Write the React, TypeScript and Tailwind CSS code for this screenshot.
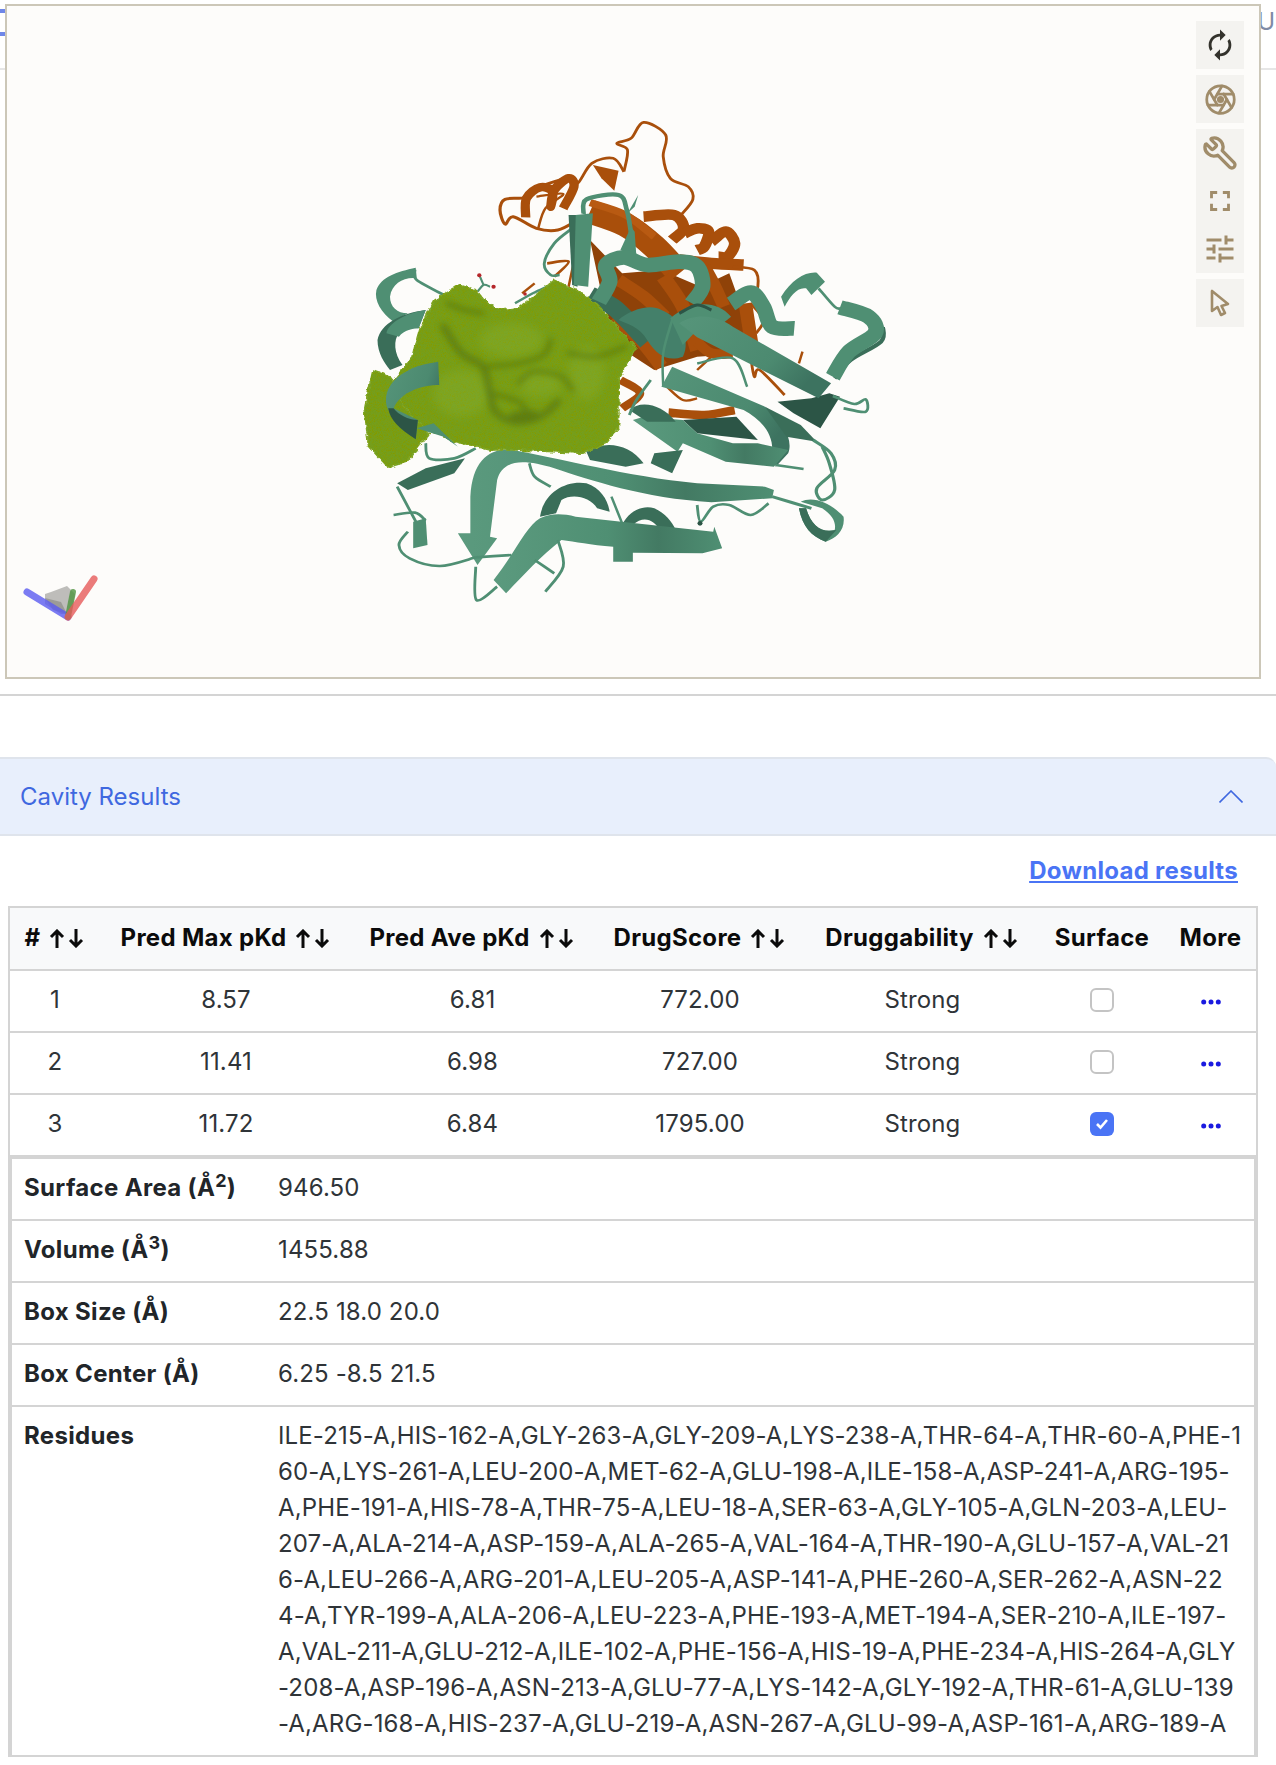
import { Aperture, Wrench } from "lucide-react";

const tan = "#a08c6a";

function ToolBtn({ children }: { children: React.ReactNode }) {
  return <div className="w-12 h-12 flex items-center justify-center">{children}</div>;
}

// Catmull-Rom curve through a list of points, for the protein's backbone drawing.
function sm(pts: number[][]) {
  let d = `M${pts[0][0]} ${pts[0][1]}`;
  for (let i = 0; i < pts.length - 1; i++) {
    const p0 = pts[i - 1] || pts[i];
    const p1 = pts[i];
    const p2 = pts[i + 1];
    const p3 = pts[i + 2] || p2;
    const c1x = p1[0] + (p2[0] - p0[0]) / 6;
    const c1y = p1[1] + (p2[1] - p0[1]) / 6;
    const c2x = p2[0] - (p3[0] - p1[0]) / 6;
    const c2y = p2[1] - (p3[1] - p1[1]) / 6;
    d += ` C${c1x} ${c1y} ${c2x} ${c2y} ${p2[0]} ${p2[1]}`;
  }
  return d;
}

function R({ p, w, c, cap = "butt" }: { p: number[][]; w: number; c: string; cap?: "butt" | "round" }) {
  return <path d={sm(p)} fill="none" stroke={c} strokeWidth={w} strokeLinecap={cap} strokeLinejoin="round" />;
}

function Protein() {
  const T = "#4f8f73";
  const M = "#44806a";
  const S = "#3a6e59";
  const D = "#2c5546";
  const O = "#a94f0b";
  const OD = "#8f4208";
  const OL = "#b85a12";
  return (
    <svg viewBox="0 0 1568 1560" preserveAspectRatio="none" className="absolute left-[333px] top-[94px] w-[560px] h-[520px]">
      <defs>
        <linearGradient id="s1" x1="0" x2="1" y1="0" y2="0">
          <stop offset="0" stopColor="#5b9a7e" />
          <stop offset="0.5" stopColor="#4f8f73" />
          <stop offset="0.72" stopColor="#437a63" />
          <stop offset="1" stopColor="#4f8f73" />
        </linearGradient>
        <linearGradient id="s2" x1="0" x2="1" y1="0" y2="0.5">
          <stop offset="0" stopColor="#56957a" />
          <stop offset="0.7" stopColor="#4c8a70" />
          <stop offset="1" stopColor="#3d7360" />
        </linearGradient>
        <filter id="tex" x="-5%" y="-5%" width="110%" height="110%">
          <feTurbulence type="fractalNoise" baseFrequency="0.06" numOctaves="2" seed="7" result="e" />
          <feDisplacementMap in="SourceGraphic" in2="e" scale="16" xChannelSelector="R" yChannelSelector="G" result="g" />
          <feTurbulence type="fractalNoise" baseFrequency="0.55" numOctaves="2" seed="4" result="n" />
          <feColorMatrix in="n" type="matrix" values="0 0 0 0 0.24  0 0 0 0 0.33  0 0 0 0 0  0 0 0 3 -1.35" result="c" />
          <feComposite in="c" in2="g" operator="in" result="t" />
          <feMerge>
            <feMergeNode in="g" />
            <feMergeNode in="t" />
          </feMerge>
        </filter>
        <filter id="bl"><feGaussianBlur stdDeviation="9" /></filter>
        <filter id="bl2"><feGaussianBlur stdDeviation="14" /></filter>
      </defs>

      {/* orange chain */}
      <R w={8} c={O} p={[[955,345],[988,298],[975,260],[925,235],[905,170],[912,105],[850,67],[815,115],[775,130],[805,150],[795,215]]} />
      <R w={8} c={O} p={[[795,215],[765,175],[705,190],[665,250],[640,232]]} />
      <path fill={O} d="M708 195 L780 212 L768 272 L732 235 Z" />
      <R w={9} c={O} p={[[640,232],[560,260],[520,292],[462,298],[448,330],[462,372],[485,350],[550,385],[610,390],[665,360]]} />
      <R w={26} c={O} p={[[520,352],[522,295],[560,262],[595,275],[590,320],[600,270],[640,235],[655,260],[625,325]]} />
      <R w={7} c={O} p={[[550,290],[625,282],[575,325],[555,385]]} />
      <R w={7} c={O} p={[[720,320],[690,400],[660,470],[640,560]]} />
      <R w={8} c={O} p={[[580,490],[640,485],[600,530]]} />
      <R w={7} c={O} p={[[545,550],[510,580]]} />
      <path fill={OD} d="M700 420 L790 520 L900 510 L1010 560 L1090 520 L1130 640 L1140 760 L1000 770 L880 810 L780 740 L740 620 Z" />
      <R w={72} c={O} p={[[700,335],[800,375],[880,440],[950,520]]} />
      <R w={22} c={OL} p={[[700,308],[800,345],[880,410]]} />
      <R w={32} c={O} p={[[850,350],[935,345],[962,385],[930,420]]} />
      <R w={32} c={O} p={[[965,400],[1000,385],[1032,395],[1020,440],[1000,450]]} />
      <R w={32} c={O} p={[[1040,425],[1080,395],[1105,430],[1085,470],[1060,470]]} />
      <R w={34} c={O} p={[[950,480],[1040,490],[1130,495]]} />
      <R w={36} c={O} p={[[1020,500],[1050,560],[1075,620]]} />
      <R w={40} c={O} p={[[905,530],[960,620],[1000,750]]} />
      <R w={36} c={O} p={[[780,540],[850,590],[910,650]]} />
      <R w={38} c={O} p={[[1135,610],[1145,680],[1155,750]]} />
      <R w={8} c={O} p={[[1100,500],[1160,510],[1170,560],[1150,600]]} />
      <R w={8} c={O} p={[[1150,610],[1185,660],[1165,700]]} />
      <R w={7} c={O} p={[[1295,755],[1285,790]]} />
      <R w={8} c={O} p={[[1150,770],[1160,830],[1175,810],[1245,885]]} />
      <R w={38} c={O} p={[[760,660],[840,720],[900,800]]} />
      <R w={24} c={O} p={[[785,840],[840,880],[790,925]]} />
      <R w={26} c={O} p={[[920,938],[1020,945],[1105,930]]} />
      <R w={7} c={O} p={[[915,860],[960,900],[1000,895]]} />
      <R w={7} c={O} p={[[1040,770],[1000,810]]} />
      <R w={30} c={O} p={[[1000,725],[1040,760],[1100,760]]} />

      {/* teal behind the surface */}
      <R w={8} c={T} p={[[650,385],[600,430],[572,490],[590,525],[615,525]]} />
      <R w={8} c={T} p={[[210,510],[215,540],[300,590]]} />
      <R w={7} c={T} p={[[490,610],[540,580],[580,560]]} />
      <path fill={T} d="M212 503 L215 535 C180 530 145 550 140 590 C140 620 160 640 190 640 L150 665 C115 640 95 600 102 570 C115 530 160 515 212 503 Z" />
      <path fill={S} d="M640 345 L672 345 L665 560 L650 555 Z" />
      <path fill={T} d="M660 345 L708 340 L695 560 L655 555 Z" />
      <R w={13} c={T} p={[[682,342],[690,298],[780,285],[803,330],[815,400]]} />
      <path fill={T} d="M835 285 L805 340 L825 320 Z" />
      <path fill={T} d="M815 380 L785 450 L830 470 L825 395 Z" />
      <R w={52} c={S} p={[[700,585],[770,625],[860,725]]} />
      <R w={44} c={T} p={[[725,605],[755,545],[745,495],[795,472],[860,495],[950,485],[1000,500],[1015,560],[985,610]]} />
      <path fill={M} d="M780 660 C810 630 870 610 900 630 C950 650 985 720 960 770 C920 785 890 770 860 720 C840 680 800 670 780 660 Z" />
      <path fill={T} d="M925 655 C980 605 1050 595 1095 650 L1060 680 L1000 690 L960 735 Z" />
      <R w={9} c={D} p={[[950,640],[1000,615],[1040,630]]} />
      <R w={7} c={T} p={[[905,860],[905,760],[930,660]]} />
      <R w={7} c={T} p={[[1000,790],[1100,775],[1140,860]]} />

      {/* right-hand loops */}
      <R w={44} c={T} p={[[1095,612],[1150,578],[1185,620],[1210,680],[1272,685]]} />
      <path fill={T} d="M1235 590 C1265 540 1300 515 1335 518 L1358 545 L1320 585 L1305 565 C1280 560 1260 590 1245 620 Z" />
      <R w={8} c={T} p={[[1340,565],[1385,620],[1402,625]]} />
      <R w={12} c={S} p={[[1520,680],[1515,725],[1430,780],[1385,835]]} />
      <R w={44} c={T} p={[[1400,622],[1480,650],[1498,700],[1425,755],[1380,830]]} />
      <path fill={D} d="M1225 905 L1320 895 L1370 880 L1400 890 L1345 985 L1270 940 Z" />
      <R w={8} c={T} p={[[1380,888],[1440,912],[1472,898],[1472,935],[1410,925]]} />
      <path fill="url(#s2)" d="M950 670 C1000 635 1060 650 1100 680 L1375 850 L1340 895 L1000 712 Z" />

      {/* middle strand */}
      <path fill={D} d="M960 960 L1110 950 L1170 1020 L1000 1000 Z" />
      <path fill="url(#s2)" d="M900 860 L930 800 L1190 920 C1240 960 1270 1020 1255 1060 L1220 1100 L1210 1060 C1215 1000 1180 960 1130 930 Z" />
      <path fill={S} d="M1190 920 L1290 975 L1335 1025 L1250 1010 Z" />
      <path fill="url(#s1)" d="M850 950 L960 960 L1000 1000 L1100 1030 L1170 1030 L1255 1050 L1215 1100 L1080 1085 L960 1030 L945 1055 L820 960 Z" />
      <path fill={S} d="M810 930 C840 900 900 910 940 965 L860 965 Z" />
      <R w={8} c={T} p={[[1220,1095],[1298,1107]]} />
      <R w={8} c={T} p={[[810,945],[830,900],[870,840]]} />
      <path fill={S} d="M690 1055 C740 1020 810 1030 850 1090 L800 1100 L700 1080 Z M880 1060 L960 1050 L930 1120 L870 1090 Z" />
      <R w={9} c={T} p={[[1325,1020],[1375,1060],[1385,1110],[1335,1165],[1350,1200],[1385,1170],[1370,1090],[1350,1040]]} />

      {/* bottom right */}
      <R w={9} c={T} p={[[1210,1190],[1320,1225]]} />
      <R w={8} c={T} p={[[1000,1215],[1010,1265],[1045,1220],[1090,1215],[1150,1245],[1200,1210]]} />
      <circle cx="1008" cy="1270" r="7" fill={D} />
      <path fill={T} d="M1290 1205 C1330 1185 1380 1215 1410 1250 C1415 1290 1390 1315 1360 1325 C1320 1310 1295 1280 1285 1225 L1305 1225 C1320 1280 1350 1300 1385 1290 C1390 1270 1380 1245 1350 1225 Z" />
      <path fill={S} d="M1285 1225 L1305 1225 C1320 1280 1350 1300 1390 1290 L1360 1325 C1320 1310 1295 1280 1285 1225 Z" />

      {/* bottom strands and helices */}
      <path fill={S} d="M560 1250 C570 1180 630 1140 690 1150 C730 1165 750 1200 755 1235 L720 1225 C700 1190 650 1180 620 1200 L605 1240 Z" />
      <path fill={S} d="M790 1275 C810 1230 850 1215 880 1225 C910 1240 930 1265 940 1290 L895 1290 C880 1260 850 1245 820 1275 Z" />
      <R w={7} c={T} p={[[760,1190],[790,1270]]} />
      <R w={8} c={T} p={[[530,1090],[545,1130],[590,1160]]} />
      <path fill="url(#s1)" d="M470 1048 C620 1075 800 1130 1000 1150 L1190 1160 L1215 1170 L1210 1195 L1040 1207 C850 1195 700 1140 600 1105 C510 1075 455 1080 440 1140 L420 1310 L440 1315 L385 1395 L330 1300 L365 1300 L365 1190 C370 1090 410 1050 470 1048 Z" />
      <path fill="url(#s1)" d="M430 1440 C490 1360 520 1280 560 1255 C590 1240 620 1240 660 1250 L1045 1295 L1048 1280 L1070 1345 L1015 1360 L820 1358 L820 1385 L765 1385 L765 1340 C700 1335 660 1325 620 1320 C560 1370 510 1430 465 1480 Z" />
      <R w={8} c={T} p={[[380,1372],[280,1398],[195,1375],[165,1335],[190,1295]]} />
      <R w={8} c={T} p={[[150,1245],[210,1238],[240,1262]]} />
      <R w={8} c={T} p={[[160,1160],[195,1230],[225,1290]]} />
      <R w={8} c={T} p={[[380,1372],[480,1365]]} />
      <R w={8} c={T} p={[[380,1400],[382,1500],[440,1460]]} />
      <R w={8} c={T} p={[[575,1475],[625,1400],[610,1320]]} />
      <R w={8} c={T} p={[[545,1380],[600,1420]]} />
      <path fill={T} d="M205 1265 L240 1255 L245 1335 L205 1345 Z" />
      <path fill={S} d="M160 1150 L240 1105 L350 1075 L320 1120 L190 1170 Z" />
      <R w={8} c={T} p={[[240,1030],[250,1075],[320,1075],[380,1045]]} />

      {/* ligand */}
      <R w={6} c={T} p={[[385,575],[402,555],[420,560]]} />
      <R w={6} c={T} p={[[402,555],[392,530]]} />
      <circle cx="390" cy="526" r="6" fill="#b5262a" />
      <circle cx="430" cy="560" r="6" fill="#b5262a" />
      <circle cx="518" cy="582" r="5" fill="#b5262a" />

      {/* surface */}
      <g filter="url(#tex)" fill="#749e1f" stroke="#7fa82c" strokeWidth="4" strokeLinejoin="round">
        <path d="M92 810 L140 830 L250 1000 L190 1085 L135 1102 L80 1040 L68 930 Z" />
        <path d="M330 555 L380 570 L410 608 L450 630 L505 622 L600 540 L665 572 L720 612 L830 745 L782 830 L780 985 L745 1030 L680 1060 L500 1050 L420 1050 L320 1025 L255 995 L210 960 L180 920 L150 840 L200 775 L222 690 L265 600 Z" />
      </g>
      <g filter="url(#bl2)" fill="#8cb53a" opacity="0.3">
        <ellipse cx="480" cy="720" rx="90" ry="50" />
        <ellipse cx="560" cy="850" rx="60" ry="40" />
        <ellipse cx="690" cy="820" rx="50" ry="80" />
        <ellipse cx="340" cy="880" rx="80" ry="70" />
      </g>
      <g fill="none" stroke="#44600a" strokeLinecap="round" filter="url(#bl)" opacity="0.5">
        <path strokeWidth="18" d={sm([[290,680],[340,760],[400,800],[420,880],[435,935],[490,965],[560,950],[610,905]])} />
        <path strokeWidth="12" d={sm([[410,800],[500,790],[570,765],[590,720]])} />
        <path strokeWidth="12" d={sm([[500,850],[540,815],[620,830],[650,870]])} />
        <path strokeWidth="30" d={sm([[490,950],[540,945]])} />
        <path strokeWidth="12" d={sm([[300,610],[350,630],[400,640]])} />
        <path strokeWidth="12" d={sm([[640,760],[720,770],[800,740]])} />
        <path strokeWidth="12" d={sm([[425,880],[500,905],[520,930]])} />
      </g>

      {/* helix over the surface */}
      <path fill={S} d="M240 630 C170 640 115 670 105 720 C105 760 125 790 140 810 L175 795 C150 760 150 720 165 700 C190 685 205 685 220 685 Z" />
      <path fill={T} d="M240 630 C180 640 135 670 130 700 L165 710 C180 690 205 685 220 685 Z" />
      <path fill="url(#s2)" d="M275 785 L278 855 C230 855 170 875 150 925 L218 960 L212 1018 L135 930 C110 870 160 800 275 785 Z" />
      <path fill={D} d="M135 925 C140 960 165 985 212 1018 L218 960 C190 960 165 945 150 925 Z" />
      <path fill={T} d="M215 985 L262 970 L330 1040 L290 1010 Z" />
    </svg>
  );
}

function Axes() {
  return (
    <svg className="absolute left-[8px] top-[562px]" width="90" height="60" viewBox="0 0 90 60">
      <path d="M36 24 L52 18 L60 26 L56 46 L46 46 L30 36 L30 26 Z" fill="#a8a8a4" opacity="0.75" />
      <path d="M30 30 L46 34 L52 46 L38 42 Z" fill="#8d8d88" opacity="0.7" />
      <path d="M53 49 L12 24" stroke="#5a5af0" strokeOpacity="0.8" strokeWidth="7" strokeLinecap="round" />
      <path d="M53 49 L58 24" stroke="#4f9440" strokeOpacity="0.8" strokeWidth="6" strokeLinecap="round" />
      <path d="M53 49 L79 11" stroke="#e65a5a" strokeOpacity="0.8" strokeWidth="7" strokeLinecap="round" />
    </svg>
  );
}

function Viewer() {
  return (
    <div className="relative -mt-[66px] ml-[5px] w-[1256px] h-[675px] border-2 border-[#ccc7b8] bg-[#fdfcfa] overflow-hidden">
      <Protein />
      <Axes />
      <div className="absolute right-[15px] top-[15px] flex flex-col gap-[6px]">
        <div className="bg-[#f4f3f0]">
          <ToolBtn>
            <svg width="34" height="34" viewBox="0 0 24 24" fill="#33322c">
              <path d="M12 6v3l4-4-4-4v3c-4.42 0-8 3.58-8 8 0 1.57.46 3.03 1.24 4.26L6.7 14.8c-.45-.83-.7-1.79-.7-2.8 0-3.31 2.69-6 6-6zm6.76 1.74L17.3 9.2c.44.84.7 1.79.7 2.8 0 3.31-2.69 6-6 6v-3l-4 4 4 4v-3c4.42 0 8-3.58 8-8 0-1.57-.46-3.03-1.24-4.26z" />
            </svg>
          </ToolBtn>
        </div>
        <div className="bg-[#f4f3f0]">
          <ToolBtn>
            <Aperture size={33} color={tan} strokeWidth={2}>
              <circle cx="12" cy="12" r="2.6" fill={tan} stroke="none" />
            </Aperture>
          </ToolBtn>
        </div>
        <div className="bg-[#f4f3f0]">
          <ToolBtn>
            <Wrench size={36} color={tan} strokeWidth={2.2} className="-scale-x-100" />
          </ToolBtn>
          <ToolBtn>
            <svg width="34" height="34" viewBox="0 0 24 24" fill={tan}>
              <path d="M7 14H5v5h5v-2H7v-3zm-2-4h2V7h3V5H5v5zm12 7h-3v2h5v-5h-2v3zM14 5v2h3v3h2V5h-5z" />
            </svg>
          </ToolBtn>
          <ToolBtn>
            <svg width="36" height="36" viewBox="0 0 24 24" fill={tan}>
              <path d="M3 17v2h6v-2H3zM3 5v2h10V5H3zm10 16v-2h8v-2h-8v-2h-2v6h2zM7 9v2H3v2h4v2h2V9H7zm14 4v-2H11v2h10zm-6-4h2V7h4V5h-4V3h-2v6z" />
            </svg>
          </ToolBtn>
        </div>
        <div className="bg-[#f4f3f0]">
          <ToolBtn>
            <svg width="20" height="28" viewBox="0 0 20 28" fill="none" stroke={tan} strokeWidth="2.6" strokeLinejoin="round">
              <path d="M2 2 L2 22 L7.5 18 L11 26 L15 24 L11.5 17 L18 15 Z" />
            </svg>
          </ToolBtn>
        </div>
      </div>
    </div>
  );
}

function SortIcon() {
  return (
    <svg width="36" height="19" viewBox="0 0 36 19" fill="none" stroke="currentColor" strokeWidth="3" className="inline-block ml-[9px] align-[-2px]">
      <path d="M8 19 V2 M2 8 L8 2 L14 8" />
      <path d="M27 0 V17 M21 11 L27 17 L33 11" />
    </svg>
  );
}

function Dots() {
  return (
    <div className="flex justify-center translate-y-px">
      <svg width="20" height="6" viewBox="0 0 20 6" fill="#1a1ae0">
        <circle cx="2.7" cy="3" r="2.5" />
        <circle cx="10" cy="3" r="2.5" />
        <circle cx="17.3" cy="3" r="2.5" />
      </svg>
    </div>
  );
}

function Check({ on }: { on?: boolean }) {
  if (on) {
    return (
      <div className="flex justify-center">
        <span className="flex items-center justify-center w-6 h-6 rounded-[6px] bg-[#4a74f5]">
          <svg width="14" height="12" viewBox="0 0 14 12" fill="none" stroke="#fff" strokeWidth="2.6">
            <path d="M2 6 L5.5 9.5 L12 2" />
          </svg>
        </span>
      </div>
    );
  }
  return (
    <div className="flex justify-center">
      <span className="w-6 h-6 rounded-[6px] border-2 border-[#c4c4c4] bg-white" />
    </div>
  );
}

const headers: [string, boolean][] = [
  ["#", true],
  ["Pred Max pKd", true],
  ["Pred Ave pKd", true],
  ["DrugScore", true],
  ["Druggability", true],
  ["Surface", false],
  ["More", false],
];

const rows = [
  ["1", "8.57", "6.81", "772.00", "Strong", false],
  ["2", "11.41", "6.98", "727.00", "Strong", false],
  ["3", "11.72", "6.84", "1795.00", "Strong", true],
] as const;

const residues = [
  "ILE-215-A,HIS-162-A,GLY-263-A,GLY-209-A,LYS-238-A,THR-64-A,THR-60-A,PHE-1",
  "60-A,LYS-261-A,LEU-200-A,MET-62-A,GLU-198-A,ILE-158-A,ASP-241-A,ARG-195-",
  "A,PHE-191-A,HIS-78-A,THR-75-A,LEU-18-A,SER-63-A,GLY-105-A,GLN-203-A,LEU-",
  "207-A,ALA-214-A,ASP-159-A,ALA-265-A,VAL-164-A,THR-190-A,GLU-157-A,VAL-21",
  "6-A,LEU-266-A,ARG-201-A,LEU-205-A,ASP-141-A,PHE-260-A,SER-262-A,ASN-22",
  "4-A,TYR-199-A,ALA-206-A,LEU-223-A,PHE-193-A,MET-194-A,SER-210-A,ILE-197-",
  "A,VAL-211-A,GLU-212-A,ILE-102-A,PHE-156-A,HIS-19-A,PHE-234-A,HIS-264-A,GLY",
  "-208-A,ASP-196-A,ASN-213-A,GLU-77-A,LYS-142-A,GLY-192-A,THR-61-A,GLU-139",
  "-A,ARG-168-A,HIS-237-A,GLU-219-A,ASN-267-A,GLU-99-A,ASP-161-A,ARG-189-A",
];

function DetailRow({ k, children, last }: { k: React.ReactNode; children: React.ReactNode; last?: boolean }) {
  return (
    <div className={`flex border-b-2 border-[#d4d4d4] ${last ? "" : "h-[62px] items-center pb-[2px]"}`}>
      <div className={`w-[254px] pl-3 font-bold tracking-[0.33px] text-[#212529] ${last ? "pt-[11px]" : ""}`}>{k}</div>
      <div className={`flex-1 pl-3 whitespace-nowrap tracking-[0.14px] ${last ? "pt-[11px] pb-[13px]" : ""}`}>{children}</div>
    </div>
  );
}

export default function App() {
  return (
    <div className="h-[1765px] overflow-hidden bg-white text-[24px] leading-[36px] text-[#2f3438] font-['Inter',sans-serif]">
      <div className="relative h-[70px] border-b-2 border-[#e6e6e6]">
        <svg width="5" height="30" viewBox="0 0 5 30" fill="none" stroke="#6f87e8" strokeWidth="4" className="absolute left-0 top-[8px]">
          <path d="M5 3 L0 3 M5 26 L0 26" />
        </svg>
        <span className="absolute right-[1px] top-[4px] text-[#7f8ba6]">U</span>
      </div>
      <Viewer />
      <div className="mt-[15px] h-[2px] bg-[#d4d4d4]" />

      <div className="mt-[61px] h-[79px] flex items-center justify-between pl-5 pr-[33px] bg-[#e8effc] border-y-2 border-[#dfe4ec] rounded-tr-[10px] text-[#3f68e0]">
        <span>Cavity Results</span>
        <svg width="24" height="13" viewBox="0 0 24 13" fill="none" stroke="#3f68e0" strokeWidth="1.6">
          <path d="M0.5 12.5 L12 1 L23.5 12.5" />
        </svg>
      </div>

      <div className="h-[70px] pt-[17px] pr-[38px] text-right">
        <a className="font-bold tracking-[0.3px] text-[#4a74f5] underline">Download results</a>
      </div>

      <div className="ml-2 w-[1250px] border-x-2 border-t-2 border-[#d4d4d4]">
        <table className="w-[1246px] table-fixed border-collapse text-center">
          <colgroup>
            <col className="w-[90px]" />
            <col className="w-[252px]" />
            <col className="w-[240px]" />
            <col className="w-[216px]" />
            <col className="w-[228px]" />
            <col className="w-[132px]" />
            <col className="w-[88px]" />
          </colgroup>
          <thead>
            <tr className="h-[62px] bg-[#f8f9fa] border-b-2 border-[#d4d4d4]">
              {headers.map(([h, s], i) => (
                <th key={h} className={`p-0 pb-[2px] font-bold tracking-[0.3px] text-[#0b0b0b] whitespace-nowrap ${i === 6 ? "pr-[3px]" : ""}`}>
                  {h}
                  {s && <SortIcon />}
                </th>
              ))}
            </tr>
          </thead>
          <tbody className="tracking-[0.12px]">
            {rows.map((r) => (
              <tr key={r[0]} className="h-[62px] border-b-2 border-[#d4d4d4]">
                <td className="p-0 pb-[2px]">{r[0]}</td>
                <td className="p-0 pb-[2px]">{r[1]}</td>
                <td className="p-0 pb-[2px] pl-px">{r[2]}</td>
                <td className="p-0 pb-[2px]">{r[3]}</td>
                <td className="p-0 pb-[2px] pl-px">{r[4]}</td>
                <td className="p-0 pb-[2px]"><Check on={r[5]} /></td>
                <td className="p-0 pr-[3px]"><Dots /></td>
              </tr>
            ))}
          </tbody>
        </table>
        <div className="border-x-2 border-t-2 border-[#d4d4d4]">
          <DetailRow k={<>Surface Area (Å<sup>2</sup>)</>}>946.50</DetailRow>
          <DetailRow k={<>Volume (Å<sup>3</sup>)</>}>1455.88</DetailRow>
          <DetailRow k="Box Size (Å)">22.5 18.0 20.0</DetailRow>
          <DetailRow k="Box Center (Å)">6.25 -8.5 21.5</DetailRow>
          <DetailRow k="Residues" last>
            {residues.map((l) => (
              <div key={l}>{l}</div>
            ))}
          </DetailRow>
        </div>
      </div>
    </div>
  );
}
